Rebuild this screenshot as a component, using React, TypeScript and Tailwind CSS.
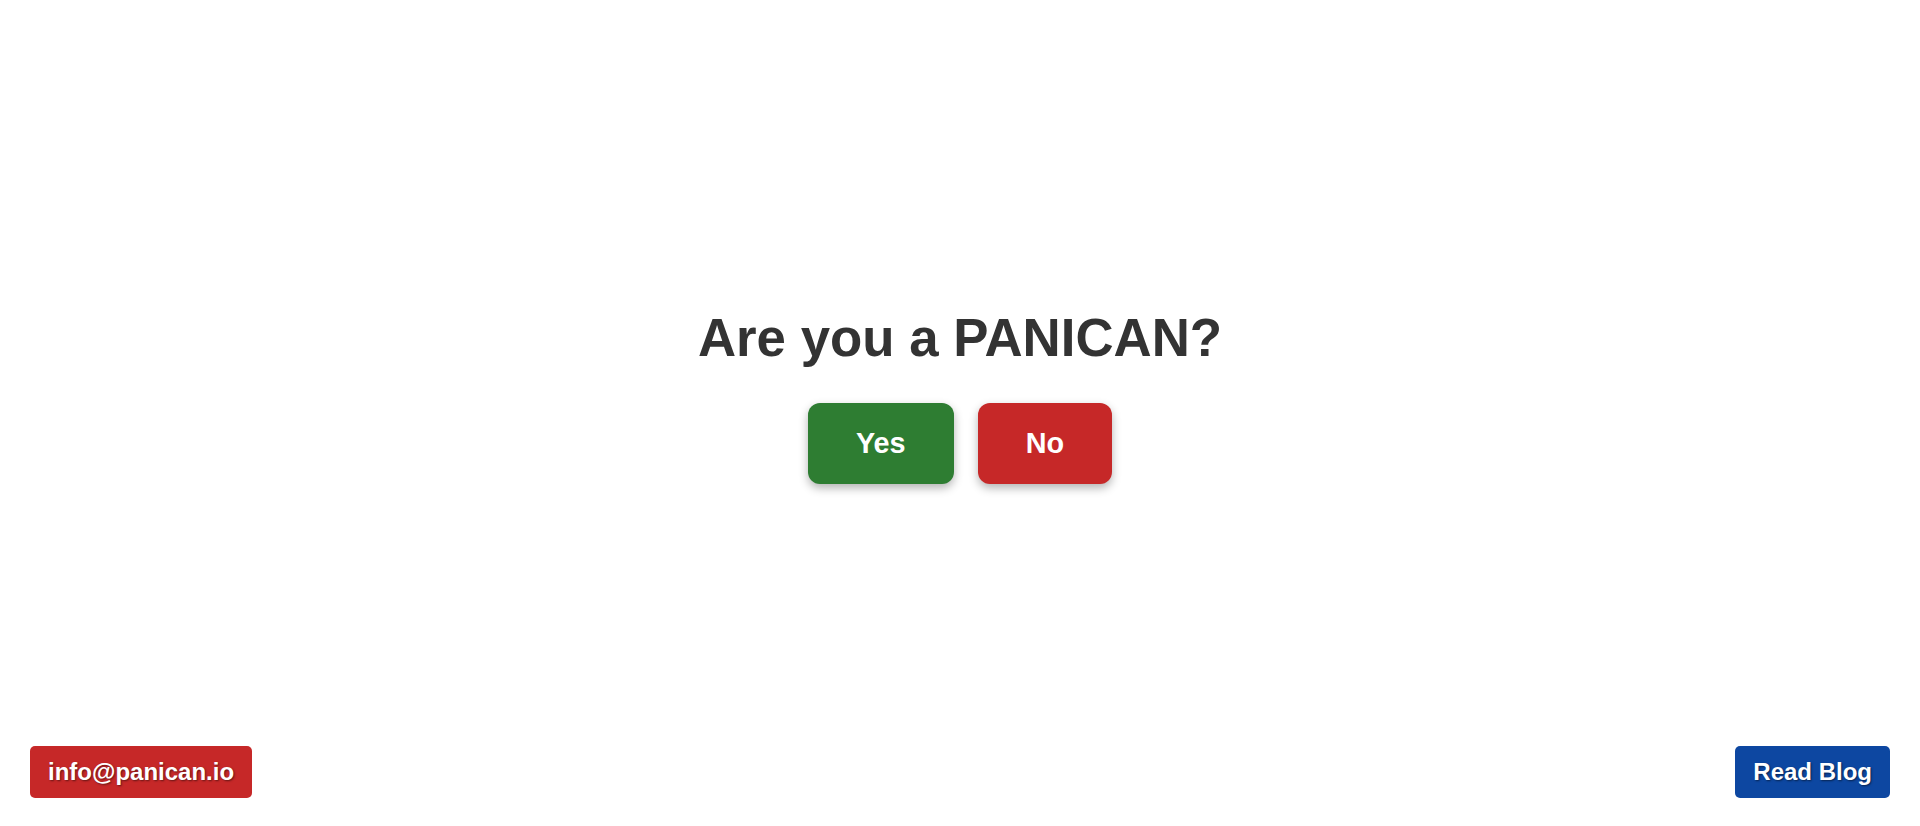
export default function App() {
  return (
    <div className="flex h-screen flex-col bg-white font-['Liberation_Sans',Arial,sans-serif]">
      <main className="flex flex-1 flex-col items-center justify-center pt-[46px]">
        <h1 className="mb-[35px] text-[52.8px] font-bold leading-[60px] text-[#333333]">
          Are you a PANICAN?
        </h1>
        <div className="flex gap-6">
          <button className="rounded-xl bg-[#2e7d32] px-12 py-6 text-[28.8px] font-bold leading-[33px] text-white shadow-[0_4px_10px_rgba(0,0,0,0.3)]">
            Yes
          </button>
          <button className="rounded-xl bg-[#c62828] px-12 py-6 text-[28.8px] font-bold leading-[33px] text-white shadow-[0_4px_10px_rgba(0,0,0,0.3)]">
            No
          </button>
        </div>
      </main>

      <footer className="flex items-end justify-between px-[30px] pb-[28px]">
        <a
          href="#"
          className="rounded-[5px] bg-[#c62828] px-[18px] py-3 text-[24px] font-bold leading-[28px] text-white [text-shadow:1px_1px_2px_rgba(0,0,0,0.5)]"
        >
          info@panican.io
        </a>
        <a
          href="#"
          className="rounded-[5px] bg-[#0d47a1] px-[18px] py-3 text-[24px] font-bold leading-[28px] text-white [text-shadow:1px_1px_2px_rgba(0,0,0,0.5)]"
        >
          Read Blog
        </a>
      </footer>
    </div>
  )
}
